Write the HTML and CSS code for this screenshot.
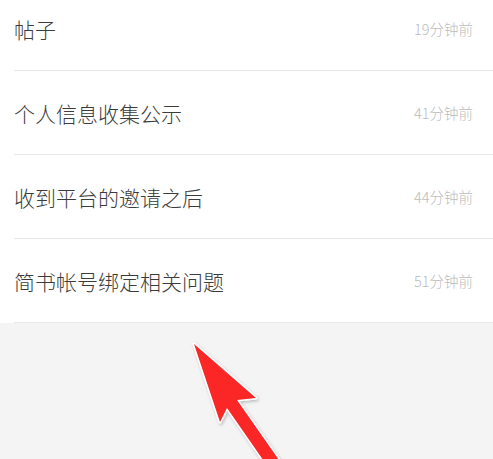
FILE: index.html
```html
<!doctype html>
<html>
  <head>
    <meta charset="UTF-8" />
    <title>消息列表</title>
    <link rel="stylesheet" href="styles.css">
  </head>
  <body>
    <div class="page">
      <ul class="list">
        <li class="row">
          <span class="title">帖子</span>
          <span class="time">19分钟前</span>
        </li>
        <li class="row">
          <span class="title">个人信息收集公示</span>
          <span class="time">41分钟前</span>
        </li>
        <li class="row">
          <span class="title">收到平台的邀请之后</span>
          <span class="time">44分钟前</span>
        </li>
        <li class="row">
          <span class="title">简书帐号绑定相关问题</span>
          <span class="time">51分钟前</span>
        </li>
      </ul>

      <div class="footer">
        <svg class="arrow" viewBox="0 323 493 136" width="493" height="136">
          <defs>
            <filter id="shadow" x="-20%" y="-20%" width="140%" height="140%">
              <feDropShadow dx="1" dy="1.5" stdDeviation="1.5" flood-color="#000" flood-opacity="0.25" />
            </filter>
          </defs>
          <polygon
            points="194,344 256,398 237,400 293,480 277,480 227,408 220,422"
            fill="#fb2727"
            stroke="#fff"
            stroke-width="3"
            stroke-linejoin="round"
            paint-order="stroke"
            filter="url(#shadow)"
          />
        </svg>
      </div>
    </div>
  </body>
</html>
```

FILE: styles.css
```css
:root {
  --bg: #f4f4f4;
  --card: #ffffff;
  --text: #3c3c3c;
  --muted: #bcbcbc;
  --line: #e8e8e8;
}

* {
  margin: 0;
  padding: 0;
  box-sizing: border-box;
}

body {
  font-family: 'Noto Sans CJK SC', 'Noto Sans', sans-serif;
  background-color: var(--bg);
  color: var(--text);
  overflow: hidden;
}

.page {
  display: flex;
  flex-direction: column;
  height: 100vh;
}

.list {
  list-style: none;
  background-color: var(--card);
  margin-top: -13px;
}

.row {
  display: flex;
  align-items: center;
  justify-content: space-between;
  height: 84px;
  margin-left: 14px;
  padding-right: 20px;
  border-bottom: 1px solid var(--line);
}

.title {
  font-size: 21px;
  font-weight: 300;
  color: var(--text);
}

.time {
  font-size: 14.5px;
  font-weight: 300;
  color: var(--muted);
}

.footer {
  flex: 1;
  position: relative;
  background-color: var(--bg);
}

.arrow {
  position: absolute;
  top: 0;
  left: 0;
  display: block;
}
```
